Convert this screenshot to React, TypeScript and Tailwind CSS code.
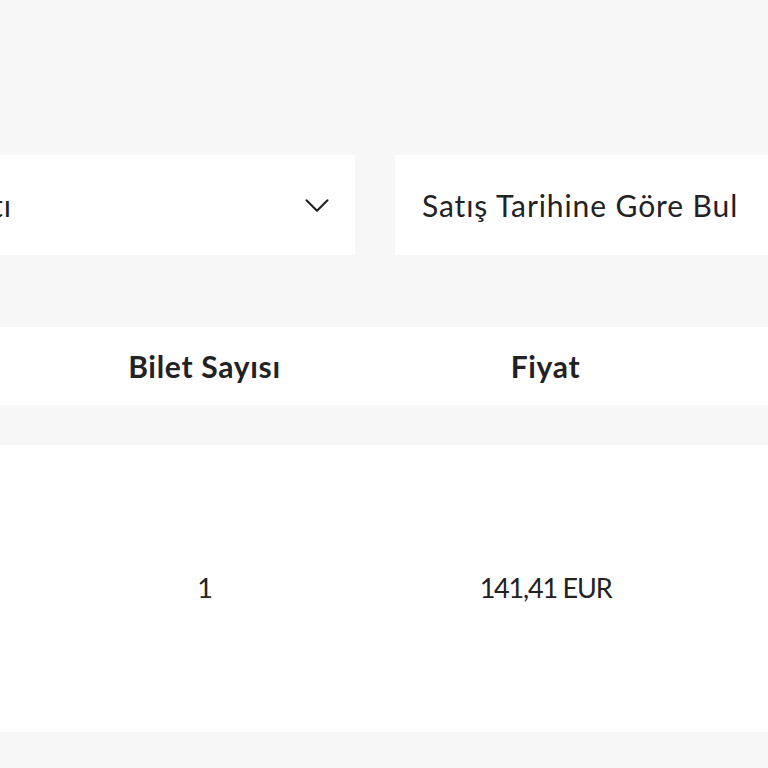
import React from 'react';

const font = { fontFamily: 'Lato, "Noto Sans", sans-serif' };

export default function App() {
  const rows = [{ count: '1', price: '141,41 EUR' }];

  return (
    <div className="w-full h-[768px] bg-[#f7f7f7] overflow-hidden text-[#222]" style={font}>
      <div className="ml-[-307px] w-[1400px] pt-[155px]">
        {/* filtreler */}
        <div className="flex gap-[40px]">
          <div className="w-[662px] h-[100px] bg-white flex items-center">
            <div className="w-[319px] pl-[27px] text-right text-[30px] tracking-[1px] whitespace-nowrap overflow-hidden">
              Bilet Fiyatı
            </div>
            <svg className="ml-auto mr-[24px] w-[28px] h-[28px]" viewBox="0 0 24 24" fill="none" stroke="#222" strokeWidth={1.8} strokeLinecap="round" strokeLinejoin="round">
              <path d="M3 8l9 9 9-9" />
            </svg>
          </div>
          <div className="flex-1 h-[100px] bg-white flex items-center pl-[27px] text-[30px] tracking-[0.9px]">
            Satış Tarihine Göre Bul
          </div>
        </div>

        {/* tablo */}
        <div className="mt-[72px]">
          <div className="h-[78px] bg-white flex items-center text-[30px] font-bold tracking-[0.7px]">
            <div className="w-[341px]"></div>
            <div className="w-[341px] text-center">Bilet Sayısı</div>
            <div className="w-[341px] text-center">Fiyat</div>
            <div className="w-[341px]"></div>
          </div>
          {rows.map((r, i) => (
            <div key={i} className="mt-[40px] h-[287px] bg-white flex items-center text-[27px] tracking-[-1.2px]">
              <div className="w-[341px]"></div>
              <div className="w-[341px] text-center">{r.count}</div>
              <div className="w-[341px] text-center">{r.price}</div>
              <div className="w-[341px]"></div>
            </div>
          ))}
        </div>
      </div>
    </div>
  );
}
